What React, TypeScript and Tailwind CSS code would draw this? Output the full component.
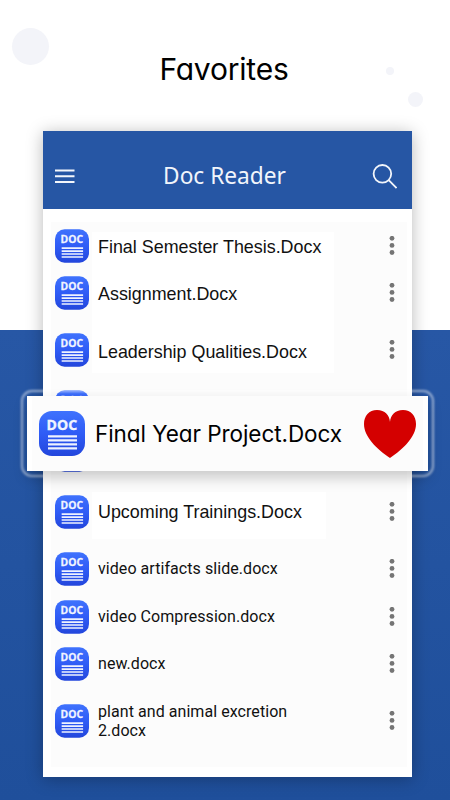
import clsx from "clsx";

type Doc = {
  name: string;
  row: string;
  text: string;
};

const arial =
  "font-['Liberation_Sans',sans-serif] text-[17.9px] leading-[20px]";
const roboto =
  "font-[Roboto,sans-serif] text-[16px] leading-[19px] tracking-[0.06px] pb-[1px]";

const docs: Doc[] = [
  {
    name: "Final Semester Thesis.Docx",
    row: "h-[47px]",
    text: `${arial} pt-[1px]`,
  },
  { name: "Assignment.Docx", row: "h-[57px]", text: `${arial} pt-[1px]` },
  {
    name: "Leadership Qualities.Docx",
    row: "h-[57px]",
    text: `${arial} pt-[4px]`,
  },
  { name: "", row: "h-[48px]", text: arial },
  { name: "", row: "h-[57px]", text: arial },
  {
    name: "Upcoming Trainings.Docx",
    row: "h-[57px]",
    text: `${arial} pb-[1px]`,
  },
  { name: "video artifacts slide.docx", row: "h-[48px]", text: roboto },
  { name: "video Compression.docx", row: "h-[47px]", text: roboto },
  { name: "new.docx", row: "h-[57px]", text: roboto },
  {
    name: "plant and animal excretion 2.docx",
    row: "h-[57px]",
    text: roboto,
  },
];

const DocIcon = ({ className }: { className?: string }) => (
  <svg viewBox="0 0 46 45" className={clsx("shrink-0", className)}>
    <defs>
      <linearGradient id="doc-bg" x1="0" y1="0" x2="0" y2="1">
        <stop offset="0" stopColor="#3f72fd" />
        <stop offset="0.5" stopColor="#2f5cf6" />
        <stop offset="1" stopColor="#2346dc" />
      </linearGradient>
    </defs>
    <rect width="46" height="45" rx="13" fill="url(#doc-bg)" />
    <text
      x="7.6"
      y="19"
      textLength="30.5"
      lengthAdjust="spacingAndGlyphs"
      fill="#f1f5ff"
      stroke="#f1f5ff"
      strokeWidth="0.35"
      className="font-['Open_Sans',sans-serif] text-[15px] font-bold"
    >
      DOC
    </text>
    <path
      d="M9 25.4h29M9 29.4h29M9 33.4h29M9 37.4h29"
      stroke="#eef2ff"
      strokeWidth="2.2"
    />
  </svg>
);

const MoreDots = () => (
  <svg viewBox="0 0 6 20" className="mr-[12px] h-[20px] w-[6px] shrink-0">
    <circle cx="3" cy="2.3" r="2.4" fill="#757575" />
    <circle cx="3" cy="9.4" r="2.4" fill="#757575" />
    <circle cx="3" cy="16.5" r="2.4" fill="#757575" />
  </svg>
);

const Header = () => (
  <div className="flex h-[78px] items-center justify-between bg-[#2656a4] pt-[11px] pr-[15px] pl-[12px]">
    <svg viewBox="0 0 20 15" className="mt-[1px] h-[15px] w-[20px]">
      <path
        d="M0 1.5h19.5M0 7.3h19.5M0 13h19.5"
        stroke="#f3f6fb"
        strokeWidth="2"
      />
    </svg>
    <h2 className="pl-[2px] font-['Noto_Sans',sans-serif] text-[22.7px] leading-[30px] text-[#f1f5fb]">
      Doc Reader
    </h2>
    <svg
      viewBox="0 0 25 25"
      className="mt-[2px] h-[25px] w-[25px]"
      fill="none"
      stroke="#f3f6fb"
      strokeWidth="1.8"
    >
      <circle cx="10.4" cy="9.8" r="8.8" />
      <path d="M16.7 16.2L24.6 24" />
    </svg>
  </div>
);

const FavoriteCard = () => (
  <div className="absolute top-[396px] left-[27px] z-10 h-[75px] w-[401px]">
    <div className="absolute -inset-[6px] rounded-[11px] border-2 border-white/55 blur-[1px]" />
    <div className="absolute inset-0 shadow-[0_7px_13px_rgba(0,0,0,0.2)]" />
    <div className="relative flex h-full items-center justify-between border-x-[5px] border-white bg-[#fcfcfc] pr-[7px] pl-[7px]">
      <div className="flex items-center">
        <DocIcon className="h-[45px] w-[46px]" />
        <span className="pl-[10px] font-[Inter,sans-serif] text-[22.5px] leading-[30px] tracking-[-0.06px] whitespace-nowrap text-black [font-feature-settings:'cv11']">
          Final Year Project.Docx
        </span>
      </div>
      <svg viewBox="0 0 52 48" className="h-[48px] w-[52px] shrink-0">
        <path
          d="M26 12C25.5 5 21 0 13 0C5 0 0 6 0 14C0 27 13 39 26 48C39 39 52 27 52 14C52 6 47 0 39 0C31 0 26.5 5 26 12Z"
          fill="#d40000"
        />
      </svg>
    </div>
  </div>
);

const App = () => {
  return (
    <div className="relative h-[800px] w-[450px] overflow-hidden bg-[linear-gradient(#ffffff_0,#ffffff_330px,#2757a5_330px,#1f4f9b_800px)]">
      <div className="absolute top-[28px] left-[12px] size-[37px] rounded-full bg-[#f3f4f9]" />
      <div className="absolute top-[67px] left-[386px] size-[8px] rounded-full bg-[#f3f4f9]" />
      <div className="absolute top-[92px] left-[408px] size-[15px] rounded-full bg-[#f3f4f9]" />

      <h1 className="relative h-[131px] pt-[49px] pr-[2px] text-center font-[Inter,sans-serif] text-[30px] leading-[40px] tracking-[-0.2px] text-black [font-feature-settings:'cv11']">
        Favorites
      </h1>

      <div className="relative ml-[43px] h-[646px] w-[369px] bg-white shadow-[0_2px_16px_rgba(0,0,0,0.28)]">
        <Header />
        <div className="relative mt-[13px] ml-[8px] h-[545px] w-[356px] bg-[#fcfcfc] pt-[7px] pl-[4px]">
          <div className="absolute top-[10px] left-[41px] h-[141px] w-[242px] bg-white" />
          <div className="absolute top-[270px] left-[41px] h-[47px] w-[234px] bg-white" />
          {docs.map((doc, i) => (
            <div key={i} className={clsx("relative", doc.row)}>
              <div className="flex h-[34px] items-center justify-between">
                <div className="flex items-center">
                  <DocIcon className="h-[34px] w-[34px]" />
                  <span
                    className={clsx(
                      "max-w-[240px] pl-[9px] text-[#111111]",
                      doc.text,
                    )}
                  >
                    {doc.name}
                  </span>
                </div>
                <MoreDots />
              </div>
            </div>
          ))}
        </div>
      </div>

      <FavoriteCard />
    </div>
  );
};

export default App;
